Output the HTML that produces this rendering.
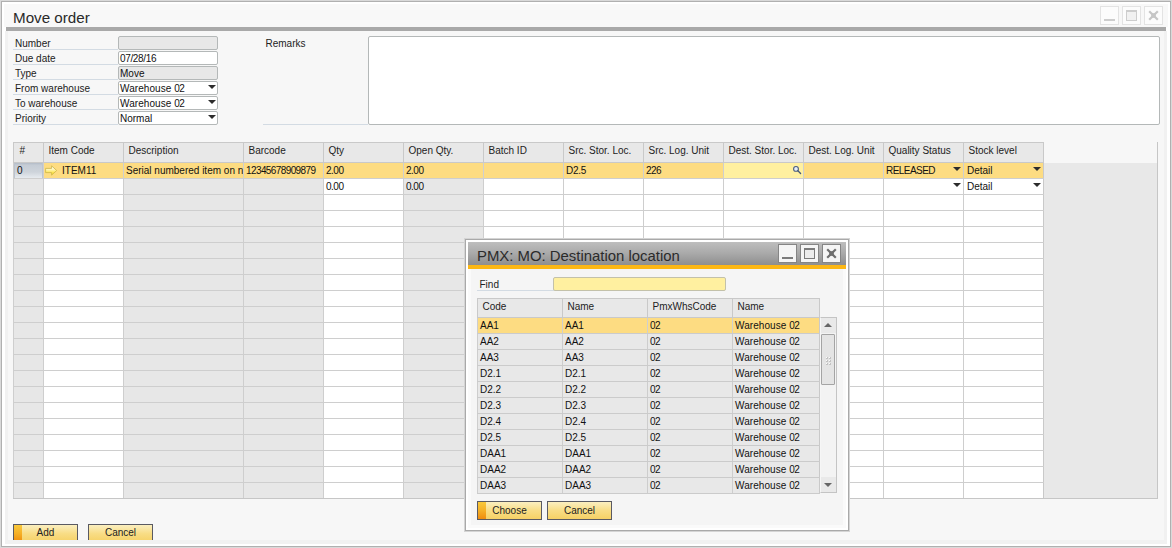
<!DOCTYPE html>
<html><head><meta charset="utf-8"><title>Move order</title>
<style>
html,body{margin:0;padding:0;}
body{width:1172px;height:548px;overflow:hidden;background:#fff;font-family:"Liberation Sans",sans-serif;font-size:10px;color:#111;position:relative;}
div,span{position:absolute;box-sizing:border-box;white-space:nowrap;}
.t{line-height:14px;height:14px;}
.d{letter-spacing:-0.6px;}
.win{left:0;top:0;width:1172px;height:548px;border:1px solid #d9d9d9;background:#fff;}
.ttl{left:13px;top:9px;font-size:15.2px;line-height:18px;color:#2a2a2a;}
.bar{left:6px;top:27px;width:1160px;height:4px;background:#a9a9a9;}
.wb{width:19px;height:19px;border:1px solid #e3e3e3;background:#fcfcfc;}
.ul{height:1px;background:#d3dbe3;}
.inp{left:118px;width:100px;height:14px;border:1px solid #b4b8b8;border-radius:2px;background:#fff;overflow:hidden;}
.inp.dis{background:#e8e8e8;}
.inp .t{left:1px;top:0px;}
.arr{width:0;height:0;border-left:4px solid transparent;border-right:4px solid transparent;border-top:4.5px solid #2c2c2c;}
.hc{top:142px;height:21px;background:#e8e8e8;border-left:1px solid #c9c9c9;border-top:1px solid #c9c9c9;border-bottom:1px solid #c9c9c9;}
.hc .t{left:4.5px;top:1px;color:#222;}
.col{top:163px;height:335px;border-left:1px solid #cecece;}
.rl{left:13px;width:1031px;height:1px;background:#cecece;}
.btn{height:19px;border:1px solid #5a5a62;background:linear-gradient(#fbefc0,#f8dd86 50%,#f6d165);text-align:center;}
.btn .t{left:0;right:0;top:1.5px;text-align:center;color:#222;}
.btn i{position:absolute;left:0;top:0;bottom:0;width:8px;background:linear-gradient(#f9c93c,#f5b027 50%,#ef8c0e);}
</style></head><body>

<div class="win"></div><div style="left:1px;top:1px;width:1170px;height:546px;border:1px solid #b0b0b0"></div>
<div style="left:4px;top:4px;width:1164px;height:23px;background:#f8f8f8"></div>
<div style="left:5px;top:31px;width:1162px;height:513px;background:#f1f1f1"></div>
<div style="left:8px;top:31px;width:1156px;height:509px;background:#f7f7f7"></div>
<div class="ttl">Move order</div><div class="bar"></div>
<div class="wb" style="left:1100px;top:6px"></div>
<div class="wb" style="left:1122px;top:6px"></div>
<div class="wb" style="left:1144px;top:6px"></div>
<div style="left:1104px;top:19px;width:11px;height:2px;background:#cdcdcd"></div>
<div style="left:1126px;top:10px;width:11px;height:11px;border:1px solid #cdcdcd;border-top-width:2px;background:#f1f1f1"></div>
<svg style="position:absolute;left:1148px;top:10px" width="11" height="11" viewBox="0 0 11 11"><path d="M1.2 1.2 L9.8 9.8 M9.8 1.2 L1.2 9.8" stroke="#c6c6c6" stroke-width="2.2" fill="none"/><rect x="3.2" y="3.2" width="4.6" height="4.6" fill="#c6c6c6"/></svg>
<div class="t" style="left:15px;top:37px;color:#222">Number</div>
<div class="ul" style="left:13px;top:49px;width:105px"></div>
<div class="inp dis" style="top:36px"><span class="t"></span></div>
<div class="t" style="left:15px;top:52px;color:#222">Due date</div>
<div class="ul" style="left:13px;top:64px;width:105px"></div>
<div class="inp" style="top:51px"><span class="t"><span style="position:static;letter-spacing:-0.35px">07/28/16</span></span></div>
<div class="t" style="left:15px;top:67px;color:#222">Type</div>
<div class="ul" style="left:13px;top:79px;width:105px"></div>
<div class="inp dis" style="top:66px"><span class="t">Move</span></div>
<div class="t" style="left:15px;top:82px;color:#222">From warehouse</div>
<div class="ul" style="left:13px;top:94px;width:105px"></div>
<div class="inp" style="top:81px"><span class="t"><span style="position:static;letter-spacing:0.06px">Warehouse </span><span style="position:static;letter-spacing:-0.5px">02</span></span></div>
<div class="arr" style="left:207.5px;top:85px"></div>
<div class="t" style="left:15px;top:97px;color:#222">To warehouse</div>
<div class="ul" style="left:13px;top:109px;width:105px"></div>
<div class="inp" style="top:96px"><span class="t"><span style="position:static;letter-spacing:0.06px">Warehouse </span><span style="position:static;letter-spacing:-0.5px">02</span></span></div>
<div class="arr" style="left:207.5px;top:100px"></div>
<div class="t" style="left:15px;top:112px;color:#222">Priority</div>
<div class="ul" style="left:13px;top:124px;width:105px"></div>
<div class="inp" style="top:111px"><span class="t">Normal</span></div>
<div class="arr" style="left:207.5px;top:115px"></div>
<div class="t" style="left:265.5px;top:37px;color:#222">Remarks</div>
<div class="ul" style="left:263px;top:124px;width:105px"></div>
<div style="left:368px;top:36px;width:792px;height:89px;border:1px solid #b4b8b8;border-radius:2px;background:#fff"></div>
<div style="left:1044px;top:163px;width:113px;height:335px;background:#e8e8e8"></div>
<div class="hc" style="left:13px;width:30px"><span class="t" style="left:5.5px">#</span></div>
<div class="col" style="left:13px;width:30px;background:#e7e7e7"></div>
<div class="hc" style="left:43px;width:80px"><span class="t">Item Code</span></div>
<div class="col" style="left:43px;width:80px;background:#fff"></div>
<div class="hc" style="left:123px;width:120px"><span class="t">Description</span></div>
<div class="col" style="left:123px;width:120px;background:#e7e7e7"></div>
<div class="hc" style="left:243px;width:80px"><span class="t">Barcode</span></div>
<div class="col" style="left:243px;width:80px;background:#e7e7e7"></div>
<div class="hc" style="left:323px;width:80px"><span class="t">Qty</span></div>
<div class="col" style="left:323px;width:80px;background:#fff"></div>
<div class="hc" style="left:403px;width:80px"><span class="t">Open Qty.</span></div>
<div class="col" style="left:403px;width:80px;background:#e7e7e7"></div>
<div class="hc" style="left:483px;width:80px"><span class="t">Batch ID</span></div>
<div class="col" style="left:483px;width:80px;background:#fff"></div>
<div class="hc" style="left:563px;width:80px"><span class="t">Src. Stor. Loc.</span></div>
<div class="col" style="left:563px;width:80px;background:#fff"></div>
<div class="hc" style="left:643px;width:80px"><span class="t">Src. Log. Unit</span></div>
<div class="col" style="left:643px;width:80px;background:#fff"></div>
<div class="hc" style="left:723px;width:80px"><span class="t">Dest. Stor. Loc.</span></div>
<div class="col" style="left:723px;width:80px;background:#fff"></div>
<div class="hc" style="left:803px;width:80px"><span class="t">Dest. Log. Unit</span></div>
<div class="col" style="left:803px;width:80px;background:#fff"></div>
<div class="hc" style="left:883px;width:80px"><span class="t">Quality Status</span></div>
<div class="col" style="left:883px;width:80px;background:#fff"></div>
<div class="hc" style="left:963px;width:80px"><span class="t">Stock level</span></div>
<div class="col" style="left:963px;width:80px;background:#fff"></div>
<div style="left:1043px;top:142px;width:1px;height:357px;background:#c9c9c9"></div>
<div style="left:1157px;top:142px;width:1px;height:357px;background:#c6c6c6"></div>
<div style="left:44px;top:163px;width:999px;height:15px;background:#fddc82"></div>
<div style="left:14px;top:163px;width:29px;height:15px;background:linear-gradient(#b3bbc7 0,#c5ccd5 14%,#ced4db 60%,#e7ebef 100%);border-left:1px solid #bcc4cf;border-right:1px solid #bcc4cf"></div>
<div style="left:724px;top:163px;width:79px;height:15px;background:#fff0a0"></div>
<div style="left:123px;top:163px;width:1px;height:15px;background:#cfcfcf"></div>
<div style="left:243px;top:163px;width:1px;height:15px;background:#cfcfcf"></div>
<div style="left:323px;top:163px;width:1px;height:15px;background:#cfcfcf"></div>
<div style="left:403px;top:163px;width:1px;height:15px;background:#cfcfcf"></div>
<div style="left:483px;top:163px;width:1px;height:15px;background:#cfcfcf"></div>
<div style="left:563px;top:163px;width:1px;height:15px;background:#cfcfcf"></div>
<div style="left:643px;top:163px;width:1px;height:15px;background:#cfcfcf"></div>
<div style="left:723px;top:163px;width:1px;height:15px;background:#cfcfcf"></div>
<div style="left:803px;top:163px;width:1px;height:15px;background:#cfcfcf"></div>
<div style="left:883px;top:163px;width:1px;height:15px;background:#cfcfcf"></div>
<div style="left:963px;top:163px;width:1px;height:15px;background:#cfcfcf"></div>
<div class="rl" style="top:178px"></div>
<div class="rl" style="top:194px"></div>
<div class="rl" style="top:210px"></div>
<div class="rl" style="top:226px"></div>
<div class="rl" style="top:242px"></div>
<div class="rl" style="top:258px"></div>
<div class="rl" style="top:274px"></div>
<div class="rl" style="top:290px"></div>
<div class="rl" style="top:306px"></div>
<div class="rl" style="top:322px"></div>
<div class="rl" style="top:338px"></div>
<div class="rl" style="top:354px"></div>
<div class="rl" style="top:370px"></div>
<div class="rl" style="top:386px"></div>
<div class="rl" style="top:402px"></div>
<div class="rl" style="top:418px"></div>
<div class="rl" style="top:434px"></div>
<div class="rl" style="top:450px"></div>
<div class="rl" style="top:466px"></div>
<div class="rl" style="top:482px"></div>
<div style="left:13px;top:498px;width:1145px;height:1px;background:#c6c6c6"></div>
<div class="t" style="left:17px;top:164px">0</div>
<div class="t" style="left:62px;top:164px">ITEM11</div>
<div class="t" style="left:126px;top:164px;width:117px;overflow:hidden">Serial numbered item on n</div>
<div class="t" style="left:246px;top:164px"><span style="position:static;letter-spacing:-0.6px">12345678909879</span></div>
<div class="t" style="left:326px;top:164px"><span style="position:static;letter-spacing:-0.5px">2.00</span></div>
<div class="t" style="left:406px;top:164px"><span style="position:static;letter-spacing:-0.5px">2.00</span></div>
<div class="t" style="left:566px;top:164px"><span style="position:static;letter-spacing:-0.3px">D2.5</span></div>
<div class="t" style="left:646px;top:164px"><span style="position:static;letter-spacing:-0.5px">226</span></div>
<div class="t" style="left:886px;top:164px"><span style="position:static;letter-spacing:-0.55px">RELEASED</span></div>
<div class="t" style="left:967px;top:164px">Detail</div>
<div class="t" style="left:326px;top:180px"><span style="position:static;letter-spacing:-0.5px">0.00</span></div>
<div class="t" style="left:406px;top:180px"><span style="position:static;letter-spacing:-0.5px">0.00</span></div>
<div class="t" style="left:967px;top:180px">Detail</div>
<div class="arr" style="left:952.5px;top:167px"></div>
<div class="arr" style="left:1032.5px;top:167px"></div>
<div class="arr" style="left:952.5px;top:183px"></div>
<div class="arr" style="left:1032.5px;top:183px"></div>
<svg style="position:absolute;left:45px;top:165px" width="13" height="11" viewBox="0 0 13 11"><defs><linearGradient id="ag" x1="0" y1="0" x2="0" y2="1"><stop offset="0.25" stop-color="#fffbe0"/><stop offset="0.8" stop-color="#fde23a"/></linearGradient></defs><path d="M0.6 3.4 H6.6 V0.9 L11.7 5.5 L6.6 10.1 V7.6 H0.6 Z" fill="url(#ag)" stroke="#cbb548" stroke-width="0.8"/></svg>
<svg style="position:absolute;left:792px;top:165px" width="10" height="10" viewBox="0 0 10 10"><circle cx="4" cy="3.9" r="2.4" fill="#e6eef8" stroke="#4a5d80" stroke-width="1.1"/><path d="M5.9 5.8 L8.6 8.5" stroke="#465878" stroke-width="1.3" stroke-linecap="round"/></svg>
<div style="left:0;top:524px;width:400px;height:16px;overflow:hidden"><div class="btn" style="left:13px;top:0;width:65px"><i></i><span class="t" style="top:1px">Add</span></div><div class="btn" style="left:88px;top:0;width:65px"><span class="t" style="top:1px">Cancel</span></div></div>
<div style="left:464px;top:238px;width:386px;height:294px;background:#fff;border:1px solid #d4d4d4"></div>
<div style="left:465px;top:239px;width:384px;height:292px;border:1px solid #a9a9a9"></div>
<div style="left:468px;top:242px;width:378px;height:23px;background:linear-gradient(#bebebe,#a9a9a9 50%,#8e8e8e)"></div>
<div style="left:468px;top:265px;width:378px;height:4px;background:#fcb714"></div>
<div style="left:468px;top:269px;width:378px;height:259px;background:#fafafa"></div>
<div style="left:471px;top:269px;width:372px;height:256px;background:#f5f5f5"></div>
<div style="left:477px;top:247px;font-size:14.9px;line-height:18px;color:#2b2b2b">PMX: MO: Destination location</div>
<div style="left:778px;top:244px;width:19px;height:19px;border:1px solid #858585;background:#f5f5f5"></div>
<div style="left:800px;top:244px;width:19px;height:19px;border:1px solid #858585;background:#f5f5f5"></div>
<div style="left:822px;top:244px;width:19px;height:19px;border:1px solid #858585;background:#f5f5f5"></div>
<div style="left:782px;top:257px;width:11px;height:2px;background:#7b7b7b"></div>
<div style="left:804px;top:248px;width:11px;height:11px;border:1px solid #7b7b7b;border-top-width:2px;background:#ececec"></div>
<svg style="position:absolute;left:826px;top:248px" width="11" height="11" viewBox="0 0 11 11"><path d="M1.2 1.2 L9.8 9.8 M9.8 1.2 L1.2 9.8" stroke="#6f6f6f" stroke-width="2.2" fill="none"/><rect x="3.2" y="3.2" width="4.6" height="4.6" fill="#6f6f6f"/></svg>
<div class="t" style="left:479.5px;top:278px;color:#222">Find</div>
<div class="ul" style="left:477px;top:290px;width:77px"></div>
<div style="left:553px;top:277px;width:173px;height:14px;border:1px solid #c3c1aa;border-radius:2px;background:#fff0a0"></div>
<div class="hc" style="left:477px;width:85px;top:298px;height:20px"><span class="t">Code</span></div>
<div style="left:477px;top:318px;width:85px;height:176px;background:#e8e8e8;border-left:1px solid #cdcdcd"></div>
<div class="hc" style="left:562px;width:85px;top:298px;height:20px"><span class="t">Name</span></div>
<div style="left:562px;top:318px;width:85px;height:176px;background:#e8e8e8;border-left:1px solid #cdcdcd"></div>
<div class="hc" style="left:647px;width:85px;top:298px;height:20px"><span class="t">PmxWhsCode</span></div>
<div style="left:647px;top:318px;width:85px;height:176px;background:#e8e8e8;border-left:1px solid #cdcdcd"></div>
<div class="hc" style="left:732px;width:87px;top:298px;height:20px"><span class="t">Name</span></div>
<div style="left:732px;top:318px;width:87px;height:176px;background:#e8e8e8;border-left:1px solid #cdcdcd"></div>
<div style="left:819px;top:298px;width:1px;height:196px;background:#c9c9c9"></div>
<div style="left:478px;top:318px;width:341px;height:15px;background:#fddc82"></div>
<div style="left:562px;top:318px;width:1px;height:15px;background:#cfcfcf"></div>
<div style="left:647px;top:318px;width:1px;height:15px;background:#cfcfcf"></div>
<div style="left:732px;top:318px;width:1px;height:15px;background:#cfcfcf"></div>
<div class="rl" style="left:477px;width:343px;top:333px;background:#cbcbcb"></div>
<div class="t" style="left:480px;top:319px">AA1</div>
<div class="t" style="left:565px;top:319px">AA1</div>
<div class="t" style="left:650px;top:319px;letter-spacing:-0.5px">02</div>
<div class="t" style="left:735px;top:319px"><span style="position:static;letter-spacing:0.06px">Warehouse </span><span style="position:static;letter-spacing:-0.5px">02</span></div>
<div class="rl" style="left:477px;width:343px;top:349px;background:#cbcbcb"></div>
<div class="t" style="left:480px;top:335px">AA2</div>
<div class="t" style="left:565px;top:335px">AA2</div>
<div class="t" style="left:650px;top:335px;letter-spacing:-0.5px">02</div>
<div class="t" style="left:735px;top:335px"><span style="position:static;letter-spacing:0.06px">Warehouse </span><span style="position:static;letter-spacing:-0.5px">02</span></div>
<div class="rl" style="left:477px;width:343px;top:365px;background:#cbcbcb"></div>
<div class="t" style="left:480px;top:351px">AA3</div>
<div class="t" style="left:565px;top:351px">AA3</div>
<div class="t" style="left:650px;top:351px;letter-spacing:-0.5px">02</div>
<div class="t" style="left:735px;top:351px"><span style="position:static;letter-spacing:0.06px">Warehouse </span><span style="position:static;letter-spacing:-0.5px">02</span></div>
<div class="rl" style="left:477px;width:343px;top:381px;background:#cbcbcb"></div>
<div class="t" style="left:480px;top:367px">D2.1</div>
<div class="t" style="left:565px;top:367px">D2.1</div>
<div class="t" style="left:650px;top:367px;letter-spacing:-0.5px">02</div>
<div class="t" style="left:735px;top:367px"><span style="position:static;letter-spacing:0.06px">Warehouse </span><span style="position:static;letter-spacing:-0.5px">02</span></div>
<div class="rl" style="left:477px;width:343px;top:397px;background:#cbcbcb"></div>
<div class="t" style="left:480px;top:383px">D2.2</div>
<div class="t" style="left:565px;top:383px">D2.2</div>
<div class="t" style="left:650px;top:383px;letter-spacing:-0.5px">02</div>
<div class="t" style="left:735px;top:383px"><span style="position:static;letter-spacing:0.06px">Warehouse </span><span style="position:static;letter-spacing:-0.5px">02</span></div>
<div class="rl" style="left:477px;width:343px;top:413px;background:#cbcbcb"></div>
<div class="t" style="left:480px;top:399px">D2.3</div>
<div class="t" style="left:565px;top:399px">D2.3</div>
<div class="t" style="left:650px;top:399px;letter-spacing:-0.5px">02</div>
<div class="t" style="left:735px;top:399px"><span style="position:static;letter-spacing:0.06px">Warehouse </span><span style="position:static;letter-spacing:-0.5px">02</span></div>
<div class="rl" style="left:477px;width:343px;top:429px;background:#cbcbcb"></div>
<div class="t" style="left:480px;top:415px">D2.4</div>
<div class="t" style="left:565px;top:415px">D2.4</div>
<div class="t" style="left:650px;top:415px;letter-spacing:-0.5px">02</div>
<div class="t" style="left:735px;top:415px"><span style="position:static;letter-spacing:0.06px">Warehouse </span><span style="position:static;letter-spacing:-0.5px">02</span></div>
<div class="rl" style="left:477px;width:343px;top:445px;background:#cbcbcb"></div>
<div class="t" style="left:480px;top:431px">D2.5</div>
<div class="t" style="left:565px;top:431px">D2.5</div>
<div class="t" style="left:650px;top:431px;letter-spacing:-0.5px">02</div>
<div class="t" style="left:735px;top:431px"><span style="position:static;letter-spacing:0.06px">Warehouse </span><span style="position:static;letter-spacing:-0.5px">02</span></div>
<div class="rl" style="left:477px;width:343px;top:461px;background:#cbcbcb"></div>
<div class="t" style="left:480px;top:447px">DAA1</div>
<div class="t" style="left:565px;top:447px">DAA1</div>
<div class="t" style="left:650px;top:447px;letter-spacing:-0.5px">02</div>
<div class="t" style="left:735px;top:447px"><span style="position:static;letter-spacing:0.06px">Warehouse </span><span style="position:static;letter-spacing:-0.5px">02</span></div>
<div class="rl" style="left:477px;width:343px;top:477px;background:#cbcbcb"></div>
<div class="t" style="left:480px;top:463px">DAA2</div>
<div class="t" style="left:565px;top:463px">DAA2</div>
<div class="t" style="left:650px;top:463px;letter-spacing:-0.5px">02</div>
<div class="t" style="left:735px;top:463px"><span style="position:static;letter-spacing:0.06px">Warehouse </span><span style="position:static;letter-spacing:-0.5px">02</span></div>
<div class="rl" style="left:477px;width:343px;top:493px;background:#cbcbcb"></div>
<div class="t" style="left:480px;top:479px">DAA3</div>
<div class="t" style="left:565px;top:479px">DAA3</div>
<div class="t" style="left:650px;top:479px;letter-spacing:-0.5px">02</div>
<div class="t" style="left:735px;top:479px"><span style="position:static;letter-spacing:0.06px">Warehouse </span><span style="position:static;letter-spacing:-0.5px">02</span></div>
<div style="left:820px;top:317px;width:17px;height:176px;border:1px solid #c4c4c4;border-left-color:#f6f6f6;background:#f3f3f3"></div>
<div style="left:821px;top:318px;width:15px;height:15px;background:#e9e9e9"></div>
<div style="left:821px;top:477px;width:15px;height:15px;background:#e9e9e9"></div>
<div style="left:823.5px;top:323px;width:0;height:0;border-left:4.5px solid transparent;border-right:4.5px solid transparent;border-bottom:4.5px solid #666"></div>
<div style="left:823.5px;top:483px;width:0;height:0;border-left:4.5px solid transparent;border-right:4.5px solid transparent;border-top:4.5px solid #666"></div>
<div style="left:821px;top:334px;width:14px;height:51px;border:1px solid #a4a4a4;background:#e4e4e4;border-radius:1px"></div>
<div style="left:826px;top:357px;width:2px;height:2px;background:#c2c2c2"></div>
<div style="left:826px;top:357px;width:1px;height:1px;background:#fbfbfb"></div>
<div style="left:829px;top:357px;width:2px;height:2px;background:#c2c2c2"></div>
<div style="left:829px;top:357px;width:1px;height:1px;background:#fbfbfb"></div>
<div style="left:826px;top:360px;width:2px;height:2px;background:#c2c2c2"></div>
<div style="left:826px;top:360px;width:1px;height:1px;background:#fbfbfb"></div>
<div style="left:829px;top:360px;width:2px;height:2px;background:#c2c2c2"></div>
<div style="left:829px;top:360px;width:1px;height:1px;background:#fbfbfb"></div>
<div style="left:826px;top:363px;width:2px;height:2px;background:#c2c2c2"></div>
<div style="left:826px;top:363px;width:1px;height:1px;background:#fbfbfb"></div>
<div style="left:829px;top:363px;width:2px;height:2px;background:#c2c2c2"></div>
<div style="left:829px;top:363px;width:1px;height:1px;background:#fbfbfb"></div>
<div class="btn" style="left:477px;top:501px;width:65px"><i></i><span class="t">Choose</span></div>
<div class="btn" style="left:547px;top:501px;width:65px"><span class="t">Cancel</span></div>
</body></html>
